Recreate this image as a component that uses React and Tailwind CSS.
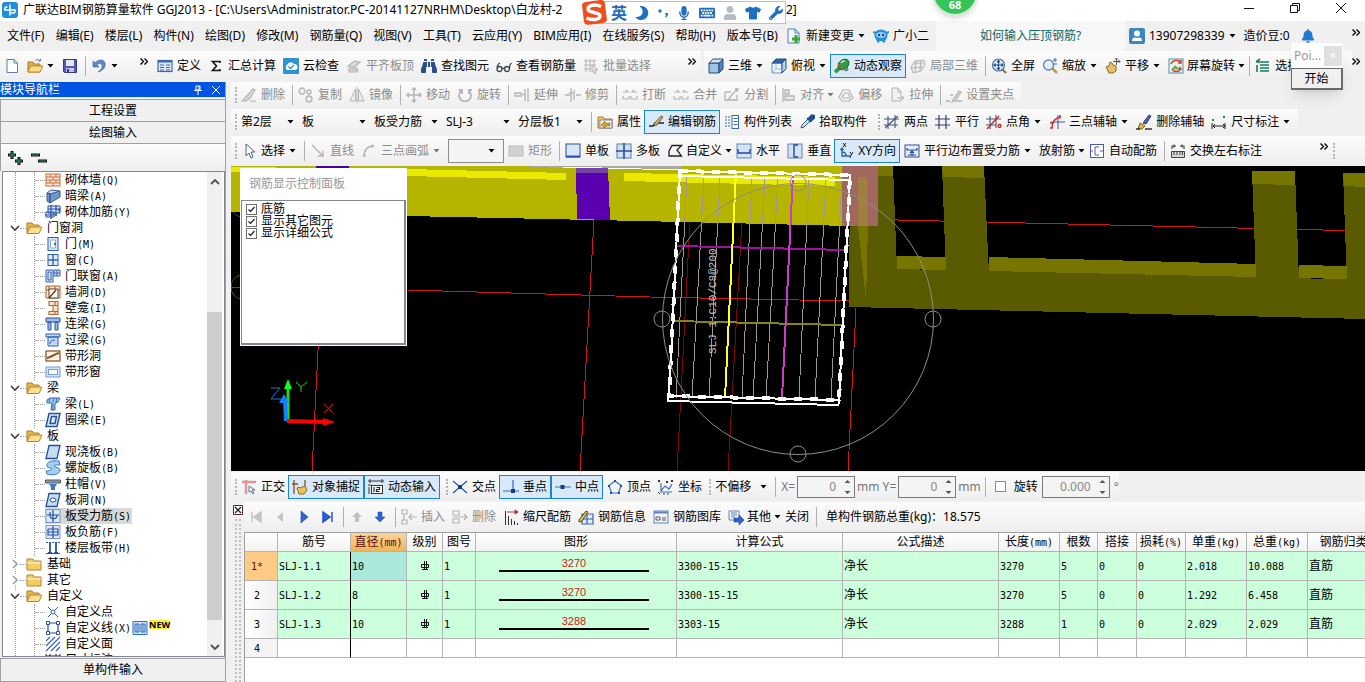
import { useState } from "react";
import {
  FaMoon,
  FaMicrophone,
  FaKeyboard,
  FaTshirt,
  FaWrench,
  FaBell,
  FaBinoculars,
  FaUser,
} from "react-icons/fa";

const BLUE = "#3a66b0";
const GRAY = "#b4b4b4";

/* All glyphs are drawn on a 16x16 grid */
const icons = {
  app: (
    <>
      <rect width="16" height="16" rx="3" fill="#1e8fe0" />
      <path d="M8 2.500v11M5.500 5H4a2 2 0 0 0-1 3h10a2 2 0 0 1-2 3H9" stroke="#fff" strokeWidth="1.500" fill="none" />
    </>
  ),
  newFile: (
    <path d="M3 1.500h7l3.500 3.500v9.500H3zM10 1.500V5h3.500" fill="#fff" stroke="#5c7ea8" />
  ),
  open: (
    <>
      <path d="M1 4h5l1 2h6v8H1z" fill="#e2b04a" stroke="#a87b22" />
      <path d="M3.500 8H16l-3 6H1z" fill="#f9dc8b" stroke="#b58a2c" />
      <path d="M8 3c2-2 4-2 5 0m-2 0h2.500V1" stroke="#4b7fb5" fill="none" />
    </>
  ),
  save: (
    <>
      <path d="M1.500 1.500h13v13h-12l-1-1z" fill="#5656b4" stroke="#38388a" />
      <rect x="4" y="2" width="8" height="6" fill="#e6e8f4" />
      <rect x="4" y="10" width="8" height="4" fill="#c3c6dd" />
      <rect x="5" y="11" width="2" height="3" fill="#38388a" />
    </>
  ),
  undo: (
    <path d="M2 3v6h6L6 7c3-3 6-1 5 2-.5 2-2 3.500-4 5 5-1 8-5 7-9-1-4-7-4-10 0z" fill="#5f87c8" stroke="#3c5f9e" strokeWidth=".6" />
  ),
  define: (
    <>
      <rect x="1" y="2.500" width="14" height="11" fill="#dfe9f8" stroke={BLUE} strokeWidth="1.200" />
      <path d="M1 3.500h14" stroke={BLUE} strokeWidth="2" />
      <path d="M3 7h4M3 9.500h4M3 12h4M9 7h4M9 9.500h4M9 12h4" stroke={BLUE} />
    </>
  ),
  sigma: <path d="M12 5V3.500H4.500L8.500 8l-4 4.500H12V11" fill="none" stroke="#111" strokeWidth="1.600" />,
  cloudCheck: (
    <>
      <rect width="16" height="16" rx="1" fill="#2d93d1" />
      <path d="M4 12a3 3 0 0 1 0-5 4 4 0 0 1 7-1 3 3 0 0 1 1 6z" fill="#fff" />
      <path d="M5.500 8.500l2 2 3.500-3.500" stroke="#2d93d1" strokeWidth="1.400" fill="none" />
    </>
  ),
  flatTop: (
    <path d="M2 8l7-5 5 1-6 5zM3 10h8v4H3zM5 12h8" fill="#dcdcdc" stroke={GRAY} strokeWidth="1.200" />
  ),
  glasses: (
    <path d="M1 11a2.500 2.500 0 1 0 5 0 2.500 2.500 0 1 0-5 0C1 8 2 6 4 5M8.500 11a2.500 2.500 0 1 0 5 0 2.500 2.500 0 1 0-5 0M6 10.500h2.500M13.500 11c0-3 .5-5 2-6" fill="none" stroke="#3d4554" strokeWidth="1.300" />
  ),
  batch: (
    <>
      <path d="M1 3h12M1 7h12M1 11h7M3 1v13M7 1v13M11 1v7" stroke={GRAY} fill="none" />
      <path d="M9 7l6 5h-3l1 3-2 .5-1-3-1 1z" fill="#e6e6e6" stroke={GRAY} />
    </>
  ),
  cube: (
    <>
      <path d="M1 5h10v10H1z" fill="#9cc3e8" stroke="#274a78" />
      <path d="M1 5l4-4h10l-4 4z" fill="#d4e7f8" stroke="#274a78" />
      <path d="M11 5l4-4v10l-4 4z" fill="#4e83bd" stroke="#274a78" />
    </>
  ),
  cubeTop: (
    <>
      <path d="M1 5h10v10H1z" fill="#eef5fc" stroke="#6c8cb5" />
      <path d="M1 5l4-4h10l-4 4z" fill="#2c65ad" stroke="#274a78" />
      <path d="M11 5l4-4v10l-4 4z" fill="#bcd6ef" stroke="#274a78" />
      <path d="M1 15l4-4h10M5 11V5" stroke="#88a6c9" strokeWidth=".7" fill="none" />
    </>
  ),
  orbit: (
    <>
      <path d="M1 14l6-5" stroke="#2f9e48" strokeWidth="4" />
      <ellipse cx="9.500" cy="6.500" rx="6" ry="4.500" transform="rotate(-40 9.500 6.500)" fill="#2f9e48" stroke="#176b2c" />
      <path d="M7 5a4 4 0 0 1 4-2" stroke="#bff0c6" strokeWidth="1.500" fill="none" />
      <path d="M4 5c1 4 4 7 9 7" stroke="#c05a3a" strokeWidth="1.200" fill="none" />
      <path d="M11 13l3-1-1-3" stroke="#3a66b0" fill="none" />
    </>
  ),
  local3d: (
    <path d="M1 9l4-6 9-1 1 5-4 6-8 2zM4 5l9 0M2 10l11-1M6 2l-1 12M11 2l-1 11" fill="#ececec" stroke={GRAY} />
  ),
  fit: (
    <>
      <path d="M11 11l4 4" stroke="#8b6f47" strokeWidth="2" />
      <circle cx="7.500" cy="7" r="6" fill="#e5f0fb" stroke="#4a6ea3" strokeWidth="1.200" />
      <path d="M7.500 2.500v9M3 7h9M6 4l1.500-1.500L9 4M6 10l1.500 1.500L9 10M4.500 5.500L3 7l1.500 1.500M10.500 5.500L12 7l-1.500 1.500" stroke="#1f4e94" strokeWidth="1.200" fill="none" />
    </>
  ),
  zoom: (
    <>
      <path d="M10 10l5 5" stroke="#c39a3a" strokeWidth="2.500" />
      <circle cx="6.500" cy="7" r="5" fill="#e5f0fb" stroke="#6b89b0" strokeWidth="1.400" />
      <path d="M11 2h4M13 0v4M11 6h4" stroke="#3a66b0" />
    </>
  ),
  pan: (
    <>
      <path d="M1 9l3-1 1-4 2 1 1 2 3 1v5l-3 2H4z" fill="#e3c16c" stroke="#8c6a1c" />
      <path d="M11.500 0v7M8 3.500h7M10 1.500L11.500 0 13 1.500M13.500 2L15 3.500 13.500 5" stroke="#555" fill="none" />
    </>
  ),
  rotateScreen: (
    <>
      <rect x="1" y="1" width="14" height="14" fill="#e8f4e4" stroke="#4d8fb8" />
      <path d="M4 11l3-4 3 3 2-2 2 4z" fill="#69a85c" />
      <path d="M3 6c1-4 8-5 10-1M13 10c-1 4-7 5-9 1M13 2v3h-3" stroke="#d83a3a" strokeWidth="1.500" fill="none" />
    </>
  ),
  pickFloor: (
    <path d="M2 4h12M5 7h9M5 10h9M5 13h9M1 4l4-3M2 7v7" stroke="#167a5c" strokeWidth="1.600" fill="none" />
  ),
  brush: (
    <path d="M6 9l6-7 2 1-5 8-4 3H2l2-3zM0 14h3M9 14h6" fill="#dedede" stroke={GRAY} strokeWidth="1.200" />
  ),
  copy: (
    <path d="M1 4a3 3 0 1 0 6 0 3 3 0 1 0-6 0M8 12a3 3 0 1 0 6 0 3 3 0 1 0-6 0M9 5a2 2 0 1 0 4 0 2 2 0 1 0-4 0" fill="#eee" stroke={GRAY} strokeWidth="1.300" />
  ),
  mirror: <path d="M6.500 2v12H1zM9.500 2v12H15zM8 0v16" fill="#eee" stroke={GRAY} />,
  move: (
    <path d="M8 1v14M1 8h14M6 3l2-2 2 2M6 13l2 2 2-2M3 6L1 8l2 2M13 6l2 2-2 2" stroke={GRAY} strokeWidth="1.500" fill="none" />
  ),
  rotate: <path d="M4 4a6 6 0 1 0 8 0M12 7V3h3M5 7V3H2" stroke={GRAY} strokeWidth="1.800" fill="none" />,
  extend: <path d="M1 6h6v3H1zM8 7.500h3M11 2v12M14 1v14" stroke={GRAY} strokeWidth="1.300" fill="none" />,
  trim: <path d="M0 8h5M11 8h5M6 1v14M9 3v10M4 6h4" stroke={GRAY} strokeWidth="1.300" fill="none" />,
  breakIcon: <path d="M1 12h6M9 12h6M1 9v3M15 9v3M1 5h5l-2-2M15 5h-5l2-2M7 9v3M9 9v3" stroke={GRAY} strokeWidth="1.200" fill="none" />,
  split: <path d="M1 5h6M1 5v8h12V8M3 14l10-12M11 2l3 0-1 3" stroke={GRAY} strokeWidth="1.300" fill="none" />,
  align: <path d="M2 1v14M4 3h4v4H4zM4 9h9v4H4z" stroke={GRAY} strokeWidth="1.300" fill="#ececec" />,
  offset: <path d="M5 3h6l4 8-4 3H4l-3-4zM7 6h3l2 4-1 1H6l-2-1z" stroke={GRAY} strokeWidth="1.200" fill="none" />,
  stretch: <path d="M3 1h6l3 4v9H3zM9 1v4h3M8 11h7l-2-2M15 11l-2 2" stroke={GRAY} fill="#f2f2f2" />,
  grip: <path d="M0 14h4M7 13l6-9 2 1-6 9-3 1zM10 14h6M4 8h3" stroke={GRAY} strokeWidth="1.300" fill="#ddd" />,
  property: (
    <>
      <path d="M1 3h5l1 2h8v9H1z" fill="#f3cf6b" stroke="#a07a25" />
      <rect x="3" y="6" width="12" height="8" fill="#fff" stroke="#7c7c9c" />
      <path d="M4 11l4-4v2h5v3H8v2z" fill="#e0a520" stroke="#7a5a10" strokeWidth=".6" />
    </>
  ),
  editRebar: (
    <>
      <path d="M1 12h4l2-3h9" stroke="#222" strokeWidth="1.400" fill="none" />
      <path d="M6 10l7-8 2 1-6 8-3 1z" fill="#c9b27a" stroke="#54431b" strokeWidth=".8" />
    </>
  ),
  list: (
    <>
      <path d="M1 3h2M4 3h2M1 6h2M4 6h2M1 9h2M4 9h2M1 12h2M4 12h2" stroke="#3a66b0" strokeWidth="1.200" />
      <rect x="8" y="1.500" width="6.500" height="13" fill="#fff" stroke="#3a66b0" />
      <path d="M9.500 4.500h4M9.500 7.500h4M9.500 10.500h4" stroke="#3a66b0" />
    </>
  ),
  dropper: (
    <>
      <path d="M2 14l1-3 6-6 2 2-6 6z" fill="#d7e9f8" stroke="#2a5a92" />
      <path d="M8 4l4 4M9 5l3-3.500a2 2 0 0 1 3 3L11 8" fill="#1d4f8c" stroke="#1d4f8c" strokeWidth="1.400" />
    </>
  ),
  axis2: <path d="M4 2v13M11 1v13M0 5h15M0 11h14M1 14L14 2" stroke="#44547a" strokeWidth="1.100" fill="none" />,
  axisPar: <path d="M4 1v14M11 1v14M0 5h15M0 11h15" stroke="#3c3c78" strokeWidth="1.200" fill="none" />,
  axisAngle: (
    <>
      <path d="M4 2v13M10 1v13M0 5h15M0 11h10" stroke="#44547a" strokeWidth="1.100" />
      <path d="M1 15L13 2M12 12a1.500 1.500 0 1 0 3 0 1.500 1.500 0 1 0-3 0" stroke="#c22" strokeWidth="1.300" fill="none" />
    </>
  ),
  axis3: (
    <>
      <path d="M9 1v14M2 8h14" stroke="#3a56a0" />
      <path d="M3 14C3 8 5 4 12 3M11 1v3.500M1 9h4M1 14h3" stroke="#c33" strokeWidth="1.500" fill="none" />
    </>
  ),
  axisDel: (
    <>
      <path d="M7 9l6-8 2 1-5 8z" fill="#4c5fb8" stroke="#303c80" />
      <path d="M4 9l5 3-3 3H2z" fill="#d9b84a" stroke="#7d641a" />
      <path d="M0 15h4M9 15h7" stroke="#333" strokeWidth="1.300" />
    </>
  ),
  dim: (
    <>
      <path d="M1 9v6M14 9v6M2 12h12M4 10l-2 2 2 2M12 10l2 2-2 2" stroke="#222" fill="none" />
      <path d="M1 5h2v2H1zM12 2h2v2h-2z" fill="#2b8f3a" />
    </>
  ),
  cursor: <path d="M5 1v12l3-3 2 5 2-1-2-5h4z" fill="#fff" stroke="#4a6487" />,
  line: <path d="M2 2l11 11M13 8v5H8" stroke={GRAY} strokeWidth="1.400" fill="none" />,
  arc: <path d="M3 14C3 7 6 3 13 3M2 12.500h3M11.500 1.500v3" stroke={GRAY} strokeWidth="1.500" fill="none" />,
  rect: <rect x="1" y="3" width="14" height="10" fill="#d2d2d2" stroke="#bdbdbd" />,
  slab: (
    <>
      <rect x="1" y="1" width="14" height="13" fill="#d7e6fa" stroke="#2c4f8f" />
      <path d="M1 13.500h14" stroke="#2c57b8" strokeWidth="2" />
    </>
  ),
  multiSlab: (
    <>
      <rect x="1" y="1" width="14" height="14" fill="#cfe2f7" stroke="#5b7ea8" />
      <path d="M8 0v16M0 8h16" stroke="#2c4f8f" strokeWidth="1.600" />
    </>
  ),
  polygon: <path d="M5 2.500h9.500L10 7l4.500 6H2V8z" fill="none" stroke="#222" strokeWidth="1.300" />,
  horiz: (
    <>
      <rect x="1" y="1" width="14" height="14" fill="#d3e3f7" stroke="#6683b0" />
      <path d="M2 6v4h12V6" fill="none" stroke="#2448a0" strokeWidth="1.400" />
    </>
  ),
  vert: (
    <>
      <rect x="1" y="1" width="14" height="14" fill="#d3e3f7" stroke="#6683b0" />
      <path d="M11 2H7v12h4" fill="none" stroke="#2448a0" strokeWidth="1.400" />
    </>
  ),
  xy: (
    <>
      <path d="M4 5v8h8M2.500 7L4 5l1.500 2M4 9c3 0 4 1 4 4" stroke="#2464a8" strokeWidth="1.300" fill="none" />
      <path d="M5 0l3 4M8 0L5 4M12 9l1.500 2.500L15 9M13.500 11L12 15" stroke="#222" fill="none" />
    </>
  ),
  parallel: (
    <>
      <rect x="1" y="2" width="14" height="12" fill="#e5eefa" stroke="#2c4f8f" />
      <path d="M3 5v2h10V5M8 13V8M6 10l2-2 2 2M4 12h8" stroke="#2448a0" strokeWidth="1.200" fill="none" />
    </>
  ),
  autoRebar: (
    <>
      <rect x="1.500" y="1.500" width="13" height="13" fill="#fff" stroke="#4a5ab0" />
      <path d="M10 4H6v8h4M1 8h3M11 8h4" stroke="#4a5ab0" fill="none" />
    </>
  ),
  swap: (
    <>
      <path d="M2 6V3h4M14 6V3h-4M4 1.500v3M12 1.500v3" stroke="#444" fill="none" strokeWidth="1.200" />
      <path d="M1.500 8.500h13v6h-13z" fill="#d8d8d8" stroke="#444" />
      <path d="M4 9v3M7 9v3M10 9v3M12.500 9v3" stroke="#444" />
    </>
  ),
  ortho: (
    <>
      <path d="M1 3h14M5 1v14" stroke="#d99a95" strokeWidth="2.500" />
      <path d="M8 7v6l2-1 2 3 1-1-2-3h3z" fill="#fff" stroke="#5a728f" />
    </>
  ),
  snap: (
    <>
      <path d="M2 1v14M13 1v6M0 5h6" stroke="#8a4a2a" strokeWidth="1.300" />
      <path d="M5 9l2-1 1 1 5-2 2 4-3 4H7z" fill="#e8c25c" stroke="#8c6a1c" />
    </>
  ),
  dynInput: (
    <>
      <path d="M0 2h16M2 0v4M14 0v4M1 15V8M0 6h3" stroke="#333" />
      <rect x="3.500" y="6.500" width="11" height="8" fill="#fff" stroke="#333" />
      <path d="M6 8v5M8.500 8.500h3v2h-3v2h3" stroke="#222" strokeWidth="1.200" fill="none" />
    </>
  ),
  cross: (
    <>
      <path d="M1 2l14 12M15 2L1 14" stroke="#1f57b5" strokeWidth="1.200" />
      <path d="M6 6h4v4H6z" fill="#143b86" />
    </>
  ),
  perp: (
    <>
      <path d="M10 1v11M0 12h16" stroke="#2c67bd" strokeWidth="1.200" />
      <path d="M8 10h4v4H8z" fill="#143b86" />
    </>
  ),
  mid: (
    <>
      <path d="M0 8h16" stroke="#4d86c9" strokeWidth="1.200" />
      <path d="M5.500 6h4v4h-4z" fill="#143b86" />
    </>
  ),
  vertex: (
    <>
      <path d="M8 2l6 4.500-2.500 7.500h-7L2 6.500z" fill="none" stroke="#2f6fc0" strokeWidth="1.100" />
      <path d="M7 1h2v2H7zM13 6h2v2h-2zM11 13h2v2h-2zM3 13h2v2H3zM1 6h2v2H1z" fill="#1c4c9c" />
    </>
  ),
  coord: (
    <>
      <path d="M3 4v9h11M3 12l4-5 4 3 3-5" stroke="#3470bd" fill="none" strokeWidth="1.200" />
      <path d="M0 1l2 2M2 1L0 3M8 2l2 2M10 2L8 4M13 1l2 2M15 1l-2 2M0 13l2 2M6 14v2M10 14v2" stroke="#333" />
    </>
  ),
  first: <path d="M4 3v10M13 3L6 8l7 5z" fill="#c4c4c4" stroke="#c4c4c4" strokeWidth="1.500" />,
  prev: <path d="M11 3L5 8l6 5z" fill="#c4c4c4" />,
  next: <path d="M5 2l7 6-7 6z" fill="#2f62d9" stroke="#1d47a8" strokeWidth=".6" />,
  last: <path d="M3 3l7 5-7 5zM12 3v10" fill="#2f62d9" stroke="#2353c4" strokeWidth="1.500" />,
  up: <path d="M8 3l5 5h-3v5H6V8H3z" fill="#c0c0c0" />,
  down: <path d="M8 13L3 8h3V3h4v5h3z" fill="#2f62d9" stroke="#1d47a8" strokeWidth=".5" />,
  insert: <path d="M1 1h5v4H1zM1 11h5v4H1zM3 5v6M8 8h8M11 5L8 8l3 3" stroke={GRAY} fill="none" strokeWidth="1.200" />,
  remove: <path d="M1 2h6v4H1zM1 10h6v4H1zM1 8h14M12 5l3 3-3 3" stroke={GRAY} fill="none" strokeWidth="1.200" />,
  scale: (
    <>
      <path d="M2.500 2v14M5.500 7v9M8.500 10v6M11.500 12v4M14.500 14v2" stroke="#333" />
      <path d="M4 3h8M12 1l3 2-3 2z" stroke="#a33" fill="#a33" />
    </>
  ),
  info: (
    <>
      <path d="M4 5h11v10H4zM9 5v10M4 10h11" fill="#e2edfa" stroke="#3563ab" strokeWidth="1.200" />
      <path d="M1 11l7-9 2 1-6 9-3 1z" fill="#e0bf62" stroke="#5b4512" />
    </>
  ),
  library: (
    <>
      <rect x="1" y="2" width="14" height="12" fill="#f3f7fd" stroke="#5f83bd" />
      <path d="M1 3.500h14" stroke="#5f83bd" strokeWidth="2" />
      <path d="M3 8h4v3H3zM9 9h4M9 11h4" stroke="#555" fill="none" />
    </>
  ),
  other: (
    <>
      <path d="M1 2h10v9H1zM3 4h6M3 6h6M3 8h4" fill="#f3f7fd" stroke="#6a85b5" />
      <path d="M6 9h5V6l5 5-5 5v-3H6z" fill="#2f62d9" stroke="#1d3f94" strokeWidth=".6" />
    </>
  ),
  newChange: (
    <>
      <path d="M2 1h7l4 4v10H2zM9 1v4h4" fill="#f4f9ff" stroke="#4d80b5" />
      <path d="M10 7v8M6 11h8" stroke="#3fa535" strokeWidth="3" />
    </>
  ),
  mascot: (
    <>
      <path d="M8 1.500c5 0 8 4 6 8-1 2-2 3-2 5H9.500v-1.500h-3v1.500H4c0-2-1-3-2-5-2-4 1-8 6-8z" fill="#2590dc" />
      <ellipse cx="8" cy="7" rx="5" ry="3" fill="#8fcdf5" />
      <path d="M5 6h2v2H5zM9 6h2v2H9z" fill="#124a7a" />
      <path d="M0 4l3 1M16 4l-3 1" stroke="#2590dc" strokeWidth="2" />
    </>
  ),
  user: (
    <>
      <rect width="16" height="16" rx="2" fill="#3c86bd" />
      <circle cx="8" cy="5.500" r="3" fill="#fff" />
      <path d="M3 13c0-4 3-4 5-3 2-1 5-1 5 3z" fill="#fff" />
    </>
  ),
  folder: (
    <>
      <path d="M1 3h6l1 2h7v9H1z" fill="#f5cb62" stroke="#b78526" />
      <path d="M1.500 7h13" stroke="#fbe6ab" strokeWidth="2" />
    </>
  ),
  folderOpen: (
    <>
      <path d="M1 3h5l1.500 2H13v8H1z" fill="#e8b64c" stroke="#a87b22" />
      <path d="M4 7h12l-3 6.500H1z" fill="#fbdf92" stroke="#b58a2c" />
    </>
  ),
  brick: (
    <>
      <rect x="1" y="2" width="14" height="12" fill="#fbe6d6" stroke="#c4703c" />
      <path d="M1 5h14M1 8h14M1 11h14M5 2v3M11 2v3M8 5v3M5 8v3M11 8v3M8 11v3" stroke="#c4703c" />
    </>
  ),
  hiddenBeam: (
    <>
      <path d="M2 5l4-3 9 1-4 4z" fill="#cfe0f5" stroke="#39598c" />
      <path d="M2 5l3 1v9l-3-2zM5 6l10-3v6L5 15z" fill="#6f97cd" stroke="#39598c" />
    </>
  ),
  wallRebar: (
    <>
      <path d="M3 2h12v7H3zM1 8h8v5H1z" fill="#dce8f8" stroke="#2451a4" />
      <path d="M6 1v14M3 5h13M11 1v11M0 11h12M13 5l2 3" stroke="#2451a4" strokeWidth="1.200" fill="none" />
    </>
  ),
  door: (
    <>
      <rect x="3" y="1.500" width="10" height="13" fill="#dbe8fa" stroke="#2f5fb0" />
      <path d="M5.500 4h5v8h-5z" fill="#fff" stroke="#8cabd8" />
      <path d="M9 7h2v2H9z" fill="#2f5fb0" />
    </>
  ),
  window: (
    <>
      <rect x="3" y="2.500" width="10" height="11" fill="#e6f0fc" stroke="#2f5fb0" />
      <path d="M8 3v10M3 8h10" stroke="#2f5fb0" strokeWidth="1.400" />
    </>
  ),
  doorWindow: <path d="M1 2h7v12H1zM3 4h3v8H3zM9 2h6v6H9zM12 2v6M9 5h6" fill="#dbe8fa" stroke="#2f5fb0" />,
  wallHole: (
    <>
      <path d="M1 2h14v12H1zM1 6h14M4 2v4M10 2v4" fill="#fbe6d6" stroke="#a8602f" />
      <path d="M4 5h9v9H4z" fill="#fff" stroke="#5b3a20" />
      <path d="M4 14l7-8" stroke="#5b3a20" strokeWidth="1.300" />
    </>
  ),
  niche: <path d="M4 1.500h9v13H4v-3h4v-6H4zM8 5.500h5M8 11.500h5M10 1.500v4M10 11.500v3" fill="#fde3cd" stroke="#b8652c" strokeWidth="1.100" />,
  linkBeam: <path d="M1 2h14v4H1zM3 6h3v8H3zM10 6h3v8h-3z" fill="#9cbdea" stroke="#2451a4" />,
  overBeam: <path d="M1 2h14v3H1zM3 5h10v9H3zM5 12c0-3 2-4 5-4" fill="#c3daf6" stroke="#2f5fb0" />,
  stripHole: (
    <>
      <rect x="1" y="3" width="14" height="10" fill="#fff3e6" stroke="#8a4c20" strokeWidth="1.200" />
      <path d="M2 10c4 0 7-4 12-5" stroke="#8a4c20" strokeWidth="2" fill="none" />
    </>
  ),
  stripWindow: (
    <>
      <rect x="1" y="3" width="14" height="10" fill="#d3e2f8" stroke="#7b9bd6" />
      <rect x="3.500" y="5.500" width="9" height="5" fill="#fff" stroke="#7b9bd6" />
    </>
  ),
  beam: (
    <>
      <path d="M2 4l3-2h10l-2 4-3 1v7H6l1-7H2z" fill="#a6c8f0" stroke="#2f6ab8" />
      <path d="M5 2l-1 4M9 2L8 6M12 2l-1 4M8 8v6" stroke="#2f6ab8" />
    </>
  ),
  ringBeam: <path d="M4 1.500h11l-3 13H1zM6.500 4.500h5l-1.500 7H5z" fill="#dfeafa" stroke="#2451a4" strokeWidth="1.500" />,
  castSlab: <path d="M4 1.500h11l-3 13H1z" fill="#c8dcf6" stroke="#2451a4" strokeWidth="1.300" />,
  spiral: <path d="M14 1C7 0 1 2 2 6c0 3 5 1 5 3 0 1-3 2-6 2l1 3c6 2 13 0 13-4 0-3-6-2-6-4 0-1 3-1 6-1z" fill="#a8cdf5" stroke="#2f7cc8" />,
  cap: (
    <>
      <path d="M.5 4h15v3H.5z" fill="#8b98a8" stroke="#4d5a6a" />
      <path d="M4 8h8l-2 3v3H6v-3z" fill="#3f77c8" />
    </>
  ),
  slabHole: (
    <>
      <path d="M4 1.500h11l-3 13H1z" fill="#c8dcf6" stroke="#2451a4" strokeWidth="1.300" />
      <ellipse cx="8" cy="8" rx="3" ry="2" fill="#fff" stroke="#2451a4" />
    </>
  ),
  forceRebar: (
    <>
      <rect x="1" y="1.500" width="14" height="13" fill="#dce8f8" stroke="#7b96c6" />
      <path d="M8 2v12M2 7h12M5 4v3c0 5 7 5 7 0" stroke="#2451a4" fill="none" strokeWidth="1.200" />
    </>
  ),
  negRebar: (
    <>
      <rect x="1" y="1.500" width="14" height="13" fill="#dce8f8" stroke="#7b96c6" />
      <path d="M8 2v12M3 5h10v6H3V5M3 8h10" stroke="#2451a4" fill="none" strokeWidth="1.200" />
    </>
  ),
  band: (
    <>
      <path d="M1 2.500h14M1 13.500h14" stroke="#2451a4" strokeDasharray="2 1" />
      <path d="M5 3v10M11 3v10M3 13h4M9 13h4" stroke="#2451a4" strokeWidth="1.800" />
    </>
  ),
  customPoint: (
    <>
      <path d="M3 3l10 10M13 3L3 13" stroke="#2f62b8" />
      <circle cx="8" cy="8" r="2" fill="#fff" stroke="#2f62b8" />
    </>
  ),
  customLine: (
    <>
      <path d="M3 3h10v10H3z" fill="none" stroke="#2451a4" strokeWidth="1.200" />
      <path d="M1.500 1.500h3v3h-3zM11.500 1.500h3v3h-3zM1.500 11.500h3v3h-3zM11.500 11.500h3v3h-3z" fill="#fff" stroke="#2451a4" />
    </>
  ),
  customFace: <path d="M1 5l4-4M1 10l9-9M1 15L15 1M6 15l9-9M11 15l4-4" stroke="#2f62b8" strokeWidth="1.100" />,
  dimension: <path d="M1 2v12M15 2v12M5 2v12M11 2v12M1 4h14" stroke="#222" />,
  book: <path d="M1 1.500h14v13H1zM3 4h4v8H3zM9 4h4v8H9zM5 4v8M11 4v8" fill="#cfe4fa" stroke="#2f6fc0" />,
};

const Icon = ({ name, className = "size-4" }) => (
  <svg viewBox="0 0 16 16" className={`${className} shrink-0`} aria-hidden="true">
    {icons[name]}
  </svg>
);

const Caret = ({ className = "text-black" }) => (
  <svg viewBox="0 0 7 4" className={`h-1 w-[7px] shrink-0 ${className}`} aria-hidden="true">
    <path d="M.5 0h6L3.500 3.500z" fill="currentColor" />
  </svg>
);

const Grip = () => (
  <span className="mr-1 h-4 shrink-0 self-center border-l-2 border-dotted border-[#b5b5b5]" />
);

const Sep = () => <span className="mr-[5px] h-5 w-px shrink-0 bg-[#b0b0b0]" />;

const More = () => (
  <svg viewBox="0 0 8 7" className="mr-[5px] mb-2 h-[7px] w-2 shrink-0" role="img" aria-label="更多">
    <path d="M.5.5l3 3-3 3M4.500.5l3 3-3 3" fill="none" stroke="#000" strokeWidth="1.400" />
  </svg>
);

const Tool = ({ icon, children, disabled, active, menu, compact, label }) => (
  <button
    type="button"
    disabled={disabled}
    aria-label={label}
    className={`flex h-6 shrink-0 items-center whitespace-nowrap ${
      disabled ? "text-[#8c8c8c]" : "text-black"
    } ${active ? "-ml-1 mr-1 border border-[#1883d7] bg-[#d8eafa] px-[3px]" : ""} ${
      menu && !compact ? "gap-1 pr-2" : ""
    } ${compact ? "gap-[3px] pr-1" : ""} ${!menu && !active ? "gap-1 pr-[7px]" : ""} ${
      active ? "gap-1" : ""
    }`}
  >
    {icon && <Icon name={icon} />}
    {children}
    {menu && <Caret className={disabled ? "text-[#777]" : "text-black"} />}
  </button>
);

const Toolbar = ({ children, className = "" }) => (
  <div
    className={`flex items-center bg-linear-to-b from-[#fcfcfc] to-[#eeeeee] pl-1 ${className}`}
  >
    {children}
  </div>
);

const Combo = ({ label, value, className }) => (
  <span className={`relative flex h-6 shrink-0 items-center ${className}`}>
    <select
      aria-label={label}
      className="w-full appearance-none bg-transparent outline-none"
      defaultValue={value}
    >
      <option>{value}</option>
    </select>
    <span className="pointer-events-none absolute right-2">
      <Caret />
    </span>
  </span>
);

const Spin = ({ label, value, className }) => (
  <span className={`flex h-[22px] shrink-0 items-center border border-[#7a7a7a] bg-[#f4f4f4] ${className}`}>
    <input
      aria-label={label}
      defaultValue={value}
      className="w-full min-w-0 bg-transparent pr-2 text-right text-[#8a8a8a] outline-none"
    />
    <svg viewBox="0 0 7 16" className="mr-[3px] h-4 w-[7px] shrink-0" aria-hidden="true">
      <path d="M0.500 4h6L3.500 1zM0.500 12h6l-3 3z" fill="#555" />
    </svg>
  </span>
);

/* Half-width characters take exactly half of a CJK cell */
const Mono = ({ children }) =>
  String(children)
    .split(/([\x20-\x7e]+)/)
    .filter(Boolean)
    .map((part, i) =>
      /^[\x20-\x7e]/.test(part) ? (
        <span key={i} className="text-[10px]">
          {part}
        </span>
      ) : (
        part
      )
    );

const menus = [
  "文件(F)",
  "编辑(E)",
  "楼层(L)",
  "构件(N)",
  "绘图(D)",
  "修改(M)",
  "钢筋量(Q)",
  "视图(V)",
  "工具(T)",
  "云应用(Y)",
  "BIM应用(I)",
  "在线服务(S)",
  "帮助(H)",
  "版本号(B)",
];

const TitleBar = () => (
  <header className="flex h-[21px] shrink-0 items-start bg-white">
    <div className="flex flex-1 items-center gap-[5px] overflow-hidden pl-[2px] whitespace-nowrap">
      <Icon name="app" />
      <h1 className="pt-px leading-[18px]">
        广联达BIM钢筋算量软件 GGJ2013 - [C:\Users\Administrator.PC-20141127NRHM\Desktop\白龙村-2
      </h1>
    </div>
    <span className="w-[579px] shrink-0 pt-px leading-[18px]">2]</span>
    <div className="absolute right-0 flex gap-[26px] pt-px pr-[14px]">
      {[
        ["最小化", "M2 7.500h10"],
        ["还原", "M2.500 4.500h7v7h-7zM4.500 4.500v-2h7v7h-2"],
        ["关闭窗口", "M2 2l10 10M12 2L2 12"],
      ].map(([label, d]) => (
        <button key={label} type="button" aria-label={label} className="px-[3px]">
          <svg viewBox="0 0 14 14" className="size-[14px]">
            <path d={d} fill="none" stroke="#111" />
          </svg>
        </button>
      ))}
    </div>
  </header>
);

const ImeBar = () => (
  <div className="absolute top-0 left-[581px] flex h-[25px] items-center">
    <svg viewBox="0 0 26 26" className="z-10 h-[26px] w-[26px]" aria-hidden="true">
      <rect x="2" y="1" width="23" height="23" rx="4" transform="rotate(-7 13 13)" fill="#ee4e1c" />
      <path d="M20 6.500C15 4 7 5 7 9c0 4.500 12 2.500 12 7 0 4-9 4.500-13.500 2" fill="none" stroke="#fff" strokeWidth="3.500" />
    </svg>
    <div className="-ml-3 flex h-[23px] items-center gap-2 border border-[#a9c6e6] bg-white pr-[2px] pl-[15px] text-[#1f6fc0]">
      <span className="text-base leading-5 font-bold">英</span>
      <FaMoon className="size-[14px] -scale-x-100" />
      <svg viewBox="0 0 12 12" className="size-3">
        <circle cx="3" cy="4" r="1.700" fill="currentColor" />
        <path d="M8 6h3c0 3-1 4-3 5 1-2 1-3 0-5z" fill="currentColor" />
      </svg>
      <FaMicrophone className="size-[14px]" />
      <FaKeyboard className="size-4" />
      <FaUser className="size-[14px] text-[#b3bcc8]" />
      <FaTshirt className="size-4" />
      <FaWrench className="size-[14px]" />
    </div>
  </div>
);

const MenuBar = () => (
  <nav className="flex h-[30px] shrink-0 items-center bg-[#f0f0f0] whitespace-nowrap">
    <div className="flex w-[786px] shrink-0 justify-between pr-2 pl-[7px]">
      {menus.map((m) => (
        <button key={m} type="button">
          {m}
        </button>
      ))}
    </div>
    <Tool icon="newChange" menu>
      新建变更
    </Tool>
    <Tool icon="mascot">广小二</Tool>
    <div className="flex h-full flex-1 items-center justify-center bg-[#f8f8f8]">
      <a href="#help" className="text-[#0b6468]">
        如何输入压顶钢筋?
      </a>
    </div>
    <div className="flex w-[240px] shrink-0 items-center pl-1">
      <Tool icon="user" menu>
        13907298339
      </Tool>
      <Tool>造价豆:0</Tool>
      <FaBell className="ml-1 size-[14px] text-[#2178d6]" />
      <span className="flex-1" />
      <More />
    </div>
  </nav>
);

const MainToolbar = () => (
  <div className="flex h-[31px] shrink-0 items-start">
    <Toolbar className="h-[29px] w-[153px] shrink-0">
      <Tool icon="newFile" label="新建" />
      <Tool icon="open" label="打开" menu />
      <Tool icon="save" label="保存" />
      <Sep />
      <Tool icon="undo" label="撤销" menu />
      <span className="flex-1" />
      <More />
    </Toolbar>
    <Toolbar className="h-[29px] w-[548px] shrink-0">
      <Tool icon="define">定义</Tool>
      <Tool icon="sigma">汇总计算</Tool>
      <Tool icon="cloudCheck">云检查</Tool>
      <Tool icon="flatTop" disabled>
        平齐板顶
      </Tool>
      <button type="button" className="flex items-center gap-1 pr-[7px]">
        <FaBinoculars className="size-4 text-[#274f86]" />
        查找图元
      </button>
      <Tool icon="glasses">查看钢筋量</Tool>
      <Tool icon="batch" disabled>
        批量选择
      </Tool>
      <span className="flex-1" />
      <More />
    </Toolbar>
    <Toolbar className="ml-[3px] h-[29px] flex-1 overflow-hidden">
      <Tool icon="cube" menu>
        三维
      </Tool>
      <Tool icon="cubeTop" menu>
        俯视
      </Tool>
      <Tool icon="orbit" active>
        动态观察
      </Tool>
      <Tool icon="local3d" disabled>
        局部三维
      </Tool>
      <Sep />
      <Tool icon="fit">全屏</Tool>
      <Tool icon="zoom" menu>
        缩放
      </Tool>
      <Tool icon="pan" menu>
        平移
      </Tool>
      <Tool icon="rotateScreen" menu compact>
        屏幕旋转
      </Tool>
      <Sep />
      <Tool icon="pickFloor">选择</Tool>
    </Toolbar>
    <span className="flex h-[29px] shrink-0 items-center">
      <More />
    </span>
  </div>
);

const EditToolbar = () => (
  <Toolbar className="h-[26px] w-fit">
    <Grip />
    <Tool icon="brush" disabled>
      删除
    </Tool>
    <Sep />
    <Tool icon="copy" disabled>
      复制
    </Tool>
    <Tool icon="mirror" disabled>
      镜像
    </Tool>
    <Sep />
    <Tool icon="move" disabled>
      移动
    </Tool>
    <Tool icon="rotate" disabled>
      旋转
    </Tool>
    <Sep />
    <Tool icon="extend" disabled>
      延伸
    </Tool>
    <Tool icon="trim" disabled>
      修剪
    </Tool>
    <Sep />
    <Tool icon="breakIcon" disabled>
      打断
    </Tool>
    <Tool icon="breakIcon" disabled>
      合并
    </Tool>
    <Tool icon="split" disabled>
      分割
    </Tool>
    <Sep />
    <Tool icon="align" disabled menu compact>
      对齐
    </Tool>
    <Tool icon="offset" disabled>
      偏移
    </Tool>
    <Tool icon="stretch" disabled>
      拉伸
    </Tool>
    <Sep />
    <Tool icon="grip" disabled>
      设置夹点
    </Tool>
  </Toolbar>
);

const ComponentToolbar = () => (
  <Toolbar className="h-[26px] w-fit">
    <Grip />
    <Combo label="楼层" value="第2层" className="w-[61px]" />
    <Combo label="构件类别" value="板" className="w-[72px]" />
    <Combo label="构件类型" value="板受力筋" className="w-[72px]" />
    <Combo label="构件名称" value="SLJ-3" className="w-[72px]" />
    <Combo label="分层" value="分层板1" className="w-[73px]" />
    <Sep />
    <Tool icon="property">属性</Tool>
    <Tool icon="editRebar" active>
      编辑钢筋
    </Tool>
    <Tool icon="list">构件列表</Tool>
    <Tool icon="dropper">拾取构件</Tool>
    <span className="flex pl-1">
      <Grip />
    </span>
    <Tool icon="axis2">两点</Tool>
    <Tool icon="axisPar">平行</Tool>
    <Tool icon="axisAngle" menu>
      点角
    </Tool>
    <Tool icon="axis3" menu>
      三点辅轴
    </Tool>
    <Tool icon="axisDel">删除辅轴</Tool>
    <Tool icon="dim" menu>
      尺寸标注
    </Tool>
  </Toolbar>
);

const DrawToolbar = () => (
  <Toolbar className="h-[29px]">
    <Grip />
    <Tool icon="cursor" menu>
      选择
    </Tool>
    <Sep />
    <Tool icon="line" disabled>
      直线
    </Tool>
    <Tool icon="arc" disabled menu>
      三点画弧
    </Tool>
    <Combo label="弧类型" value="" className="mr-1 w-[56px] border border-[#8c8c8c] bg-[#f4f4f4]" />
    <Tool icon="rect" disabled>
      矩形
    </Tool>
    <Sep />
    <Tool icon="slab">单板</Tool>
    <Tool icon="multiSlab">多板</Tool>
    <Tool icon="polygon" menu compact>
      自定义
    </Tool>
    <Tool icon="horiz">水平</Tool>
    <Tool icon="vert">垂直</Tool>
    <Tool icon="xy" active>
      XY方向
    </Tool>
    <Tool icon="parallel" menu>
      平行边布置受力筋
    </Tool>
    <Tool menu compact>
      放射筋
    </Tool>
    <Tool icon="autoRebar">自动配筋</Tool>
    <Sep />
    <Tool icon="swap">交换左右标注</Tool>
    <span className="flex-1" />
    <More />
    <span className="flex w-8">
      <Grip />
    </span>
  </Toolbar>
);

const SnapToolbar = () => (
  <div className="flex h-[31px] shrink-0 items-center bg-[#f0f0f0]">
    <Toolbar className="h-[29px]">
      <Grip />
      <Tool icon="ortho">正交</Tool>
      <Tool icon="snap" active>
        对象捕捉
      </Tool>
      <Tool icon="dynInput" active>
        动态输入
      </Tool>
      <span className="flex pl-[2px]">
        <Grip />
      </span>
      <Tool icon="cross">交点</Tool>
      <Tool icon="perp" active>
        垂点
      </Tool>
      <Tool icon="mid" active>
        中点
      </Tool>
      <Tool icon="vertex">顶点</Tool>
      <Tool icon="coord">坐标</Tool>
      <Grip />
      <Combo label="偏移方式" value="不偏移" className="w-[60px]" />
      <Sep />
      <span className="flex items-center gap-[2px] text-[#777]">
        X=
        <Spin label="X" value="0" className="w-[58px]" />
        mm Y=
        <Spin label="Y" value="0" className="w-[58px]" />
        mm
      </span>
      <span className="ml-1 flex items-center gap-1">
        <Sep />
        <label className="flex items-center gap-2">
          <input type="checkbox" className="size-[11px] appearance-none border border-[#8a8a8a] bg-white" />
          旋转
        </label>
        <Spin label="旋转角度" value="0.000" className="w-[68px]" />
        <span className="text-[#777]">°</span>
      </span>
    </Toolbar>
  </div>
);

const folders = [
  {
    open: true,
    hideTitle: true,
    items: [
      ["brick", "砌体墙(Q)"],
      ["hiddenBeam", "暗梁(A)"],
      ["wallRebar", "砌体加筋(Y)"],
    ],
  },
  {
    name: "门窗洞",
    open: true,
    items: [
      ["door", "门(M)"],
      ["window", "窗(C)"],
      ["doorWindow", "门联窗(A)"],
      ["wallHole", "墙洞(D)"],
      ["niche", "壁龛(I)"],
      ["linkBeam", "连梁(G)"],
      ["overBeam", "过梁(G)"],
      ["stripHole", "带形洞"],
      ["stripWindow", "带形窗"],
    ],
  },
  {
    name: "梁",
    open: true,
    items: [
      ["beam", "梁(L)"],
      ["ringBeam", "圈梁(E)"],
    ],
  },
  {
    name: "板",
    open: true,
    items: [
      ["castSlab", "现浇板(B)"],
      ["spiral", "螺旋板(B)"],
      ["cap", "柱帽(V)"],
      ["slabHole", "板洞(N)"],
      ["forceRebar", "板受力筋(S)"],
      ["negRebar", "板负筋(F)"],
      ["band", "楼层板带(H)"],
    ],
  },
  { name: "基础", items: [] },
  { name: "其它", items: [] },
  {
    name: "自定义",
    open: true,
    items: [
      ["customPoint", "自定义点"],
      ["customLine", "自定义线(X)"],
      ["customFace", "自定义面"],
      ["dimension", "尺寸标注(W)"],
    ],
  },
];

const Chevron = ({ open }) => (
  <svg viewBox="0 0 10 10" className="z-10 size-[10px] shrink-0 bg-white" aria-hidden="true">
    <path
      d={open ? "M1 3l4 4 4-4" : "M3 1l4 4-4 4"}
      fill="none"
      stroke={open ? "#404040" : "#a0a0a0"}
      strokeWidth="1.600"
    />
  </svg>
);

const Tree = () => {
  const [selected, setSelected] = useState("板受力筋(S)");

  return (
    <ul className="ml-3 flex-1 border-l border-dotted border-[#9a9a9a] font-[DejaVu_Sans_Mono,Noto_Sans_CJK_SC,monospace]">
      {folders.map((folder, f) => (
        <li key={f}>
          {!folder.hideTitle && (
            <button type="button" className="-ml-[6px] flex h-4 items-center leading-4">
              <Chevron open={folder.open} />
              <span className="w-[6px] border-t border-dotted border-[#9a9a9a]" />
              <Icon name={folder.open ? "folderOpen" : "folder"} className="mr-[5px] size-4" />
              {folder.name}
            </button>
          )}
          <ul className="ml-[18px] border-l border-dotted border-[#9a9a9a]">
            {folder.items.map(([icon, name]) => (
              <li key={name} className="flex h-4 items-center">
                <span className="w-[10px] border-t border-dotted border-[#9a9a9a]" />
                <button
                  type="button"
                  onClick={() => setSelected(name)}
                  className={`flex h-4 items-center gap-1 pr-px leading-4 whitespace-nowrap ${
                    selected === name ? "bg-[#d9d9d9]" : ""
                  }`}
                >
                  <Icon name={icon} />
                  <span>
                    <Mono>{name}</Mono>
                  </span>
                </button>
                {icon === "customLine" && (
                  <>
                    <Icon name="book" />
                    <span className="mb-2 ml-px bg-[#ffee33] font-[Open_Sans] text-[9px] leading-[9px] font-bold">
                      NEW
                    </span>
                  </>
                )}
              </li>
            ))}
          </ul>
        </li>
      ))}
    </ul>
  );
};

const Sidebar = () => (
  <aside className="flex w-[226px] shrink-0 flex-col border-r border-[#a0a0a0] bg-[#f0f0f0]">
    <div className="flex h-[15px] shrink-0 items-center bg-[#0054e3] pr-1 leading-[15px] text-white">
      <h2 className="flex-1">模块导航栏</h2>
      <button type="button" aria-label="固定" className="mr-2">
        <svg viewBox="0 0 10 10" className="size-[10px]">
          <path d="M3 1h4v4H3zM6 1v4M1 5.500h8M5 5.500V10" fill="none" stroke="#fff" />
        </svg>
      </button>
      <button type="button" aria-label="关闭导航栏">
        <svg viewBox="0 0 10 10" className="size-[10px]">
          <path d="M1 1l8 8M9 1L1 9" stroke="#fff" />
        </svg>
      </button>
    </div>
    <button type="button" className="mt-[2px] h-[23px] shrink-0 border-y border-l border-[#a0a0a0]">
      工程设置
    </button>
    <button type="button" className="h-[22px] shrink-0 border-b border-l border-[#a0a0a0]">
      绘图输入
    </button>
    <div className="flex h-[27px] shrink-0 items-center gap-2 border-l border-[#a0a0a0] bg-linear-to-b from-[#fcfcfc] to-[#eeeeee] pl-[6px]">
      <button type="button" aria-label="全部展开">
        <svg viewBox="0 0 16 16" className="size-4">
          <path d="M5 1v8M1 5h8M12 7v8M8 11h8" stroke="#111" strokeWidth="3" />
          <path d="M5 2v6M2 5h6M12 8v6M9 11h6" stroke="#20a070" />
        </svg>
      </button>
      <button type="button" aria-label="全部折叠">
        <svg viewBox="0 0 16 16" className="size-4">
          <path d="M0 5h9M7 11h9" stroke="#111" strokeWidth="3" />
          <path d="M1 5h7M8 11h7" stroke="#20a070" />
        </svg>
      </button>
    </div>
    <div className="ml-[2px] flex min-h-0 flex-1 overflow-hidden border border-[#828790] bg-white">
      <div className="flex-1 overflow-hidden">
        <Tree />
      </div>
      <div className="mr-[2px] flex w-[15px] shrink-0 flex-col items-center bg-[#f0f0f0] py-1">
        <svg viewBox="0 0 10 10" className="mt-px size-[10px]">
          <path d="M1 7l4-4 4 4" fill="none" stroke="#505050" strokeWidth="1.800" />
        </svg>
        <span className="h-[125px] shrink-0" />
        <span className="w-full flex-1 bg-[#cdcdcd]" />
        <span className="h-[22px] shrink-0" />
        <svg viewBox="0 0 10 10" className="size-[10px]">
          <path d="M1 3l4 4 4-4" fill="none" stroke="#505050" strokeWidth="1.800" />
        </svg>
      </div>
    </div>
    <button type="button" className="mt-px h-6 shrink-0 border-y border-l border-[#a0a0a0]">
      单构件输入
    </button>
  </aside>
);

/* [top x, bottom x] of every bar laid across the slab */
const bars = [
  [687, 676],
  [704, 692],
  [720, 709],
  [752, 742],
  [765, 753],
  [778, 766],
  [809, 799],
  [826, 815],
  [842, 831],
];

const Scene = () => (
  <svg
    viewBox="231 166 1134 305"
    preserveAspectRatio="xMinYMin slice"
    className="absolute inset-0 h-full w-full"
    shapeRendering="crispEdges"
  >
    <g stroke="#d01818" fill="none">
      <path d="M231 287L407 290 650 297 849 301M855 219L1365 231M594 219L580 471M319 330L312 471M856 308L848 471" />
      <path d="M690 220L677 471M742 220L728 471" stroke="#7c0808" />
    </g>
    <g fill="none" stroke="#0c5c1c">
      <circle cx="243" cy="287" r="12" />
      <circle cx="243" cy="205" r="12" />
    </g>

    {/* Beam */}
    <path d="M231 166H850V226L640 221 407 216 231 212z" fill="#b5b500" />
    <path d="M231 167L407 169 566 173V180L407 176 231 172zM624 173L835 177V186L624 181z" fill="#eaea00" />
    <path d="M520 166H681V170L560 168z" fill="#a8a8a0" />
    <path d="M562 167L681 170" stroke="#fff" />
    <path d="M576 168H608L610 220 577 219z" fill="#5a00b0" />
    <path d="M576 168H608V173H576z" fill="#7344a4" />
    <path d="M316 166H349V168H316z" fill="#4a00a0" />

    {/* Frame on the right */}
    <path d="M850 166H893L897 269 989 271 1256 277 1365 280V319L849 307z" fill="#5a5a00" />
    <path d="M942 166H984L989 275H946zM1252 171H1295L1299 280H1256zM1343 173H1365V284H1347z" fill="#5a5a00" />
    <path d="M897 256L946 257V270L897 269zM989 257L1256 264V277L989 271zM1299 265L1347 266V279L1299 278zM942 166H984V178L943 177zM1252 171H1295V185L1252 184zM1343 173H1365V187L1344 186zM850 166H893V176H850z" fill="#757500" />
    <path d="M858 226L866 300 868 226z" fill="#757500" />
    <path d="M842 166H878V226H842z" fill="#a0685e" />
    <path d="M858 177H867V226H858z" fill="#a08040" />

    {/* Slab with its rebars */}
    <g stroke="#a39590" fill="none">
      {bars.map(([top, bottom]) => (
        <path key={top} d={`M${top} 177L${bottom} 398`} />
      ))}
    </g>
    <path d="M677 246L847 250" stroke="#a010a0" strokeWidth="2" />
    <path d="M673 321L842 325" stroke="#85851c" strokeWidth="2" />
    <path d="M736 172L725 398" stroke="#ffff20" strokeWidth="2" />
    <path d="M793 174L782 398" stroke="#cc3ccc" strokeWidth="2" />
    <g fill="none" stroke="#fff">
      <path d="M680 171L850 175 839 400 669 396z" strokeWidth="2" />
      <path d="M680 171L850 175 839 400 669 396z" strokeWidth="4" strokeDasharray="8 8" />
      <path d="M681 176L849 180M668 396V401L838 405 840 400" strokeWidth="2" />
    </g>
    <g fill="none" stroke="#8d8d85" shapeRendering="auto">
      <circle cx="798" cy="319" r="135.500" />
      <circle cx="798" cy="183" r="8" />
      <circle cx="662" cy="319" r="8" />
      <circle cx="933" cy="319" r="8" />
      <circle cx="798" cy="454" r="8" />
    </g>
    <text
      transform="translate(716 354) rotate(-90)"
      className="fill-[#c4c4c4] font-[Liberation_Mono] text-[11px]"
    >
      SLJ 1:C10/C8@200
    </text>

    {/* Axes */}
    <g shapeRendering="auto">
      <path d="M288 421V388" stroke="#10e020" strokeWidth="3" />
      <path d="M288 379l4 10h-8z" fill="#10ff20" />
      <path d="M286 421L285 400" stroke="#1080ff" strokeWidth="4" />
      <path d="M284 394l5 9h-10z" fill="#1080ff" />
      <path d="M287 421L324 422" stroke="#f00" strokeWidth="4" />
      <path d="M335 422l-12-4v8z" fill="#f00" />
      <path d="M271 388h9l-9 11h10" stroke="#2a70d8" fill="none" />
      <path d="M296 382l5 5 6-5M301 387v5" stroke="#20c030" fill="none" />
      <path d="M324 404l9 9M333 404l-9 9" stroke="#c01818" />
    </g>
  </svg>
);

const DisplayPanel = () => (
  <section className="absolute top-[2px] left-[9px] flex h-[178px] w-[167px] flex-col bg-white p-px">
    <h2 className="h-[31px] pl-2 leading-[29px] text-[#999]">钢筋显示控制面板</h2>
    <div className="flex-1 border-t border-r-2 border-b-2 border-l border-[#828790] pt-[2px] pl-1">
      {["底筋", "显示其它图元", "显示详细公式"].map((name) => (
        <label key={name} className="flex h-3 items-center gap-1 leading-3">
          <span className="relative size-[11px]">
            <input
              type="checkbox"
              defaultChecked
              className="peer block size-[11px] appearance-none border border-[#707070] bg-white"
            />
            <svg
              viewBox="0 0 11 11"
              className="pointer-events-none absolute inset-0 hidden size-[11px] peer-checked:block"
            >
              <path d="M2.500 5.500l2 2 4-4.500" fill="none" stroke="#222" strokeWidth="1.200" />
            </svg>
          </span>
          {name}
        </label>
      ))}
    </div>
  </section>
);

const columns = [
  ["", "w-[33px]"],
  ["筋号", "w-[73px]"],
  ["直径(mm)", "w-[56px]"],
  ["级别", "w-[36px]"],
  ["图号", "w-[33px]"],
  ["图形", "w-[201px]"],
  ["计算公式", "w-[166px]"],
  ["公式描述", "w-[156px]"],
  ["长度(mm)", "w-[61px]"],
  ["根数", "w-[38px]"],
  ["搭接", "w-[39px]"],
  ["损耗(%)", "w-[49px]"],
  ["单重(kg)", "w-[61px]"],
  ["总重(kg)", "w-[61px]"],
  ["钢筋归类", "w-[72px]"],
];

const rows = [
  ["SLJ-1.1", "10", "", "1", "3270", "3300-15-15", "净长", "3270", "5", "0", "0", "2.018", "10.088", "直筋"],
  ["SLJ-1.2", "8", "", "1", "3270", "3300-15-15", "净长", "3270", "5", "0", "0", "1.292", "6.458", "直筋"],
  ["SLJ-1.3", "10", "", "1", "3288", "3303-15", "净长", "3288", "1", "0", "0", "2.029", "2.029", "直筋"],
];

const GradeMark = () => (
  <svg viewBox="0 0 10 10" className="mx-auto size-[10px]" role="img" aria-label="三级钢">
    <path d="M1.500 3.500h7v3h-7zM4.500 0v9M6.500 0v9M2 8.500h6" fill="none" stroke="#111" />
  </svg>
);

const cell = "border-r border-b border-[#b4b4b4]";

const RebarTable = () => (
  <div className="min-h-0 flex-1 overflow-hidden border-t border-l border-[#a0a0a0] bg-white">
    <table className="w-[1135px] table-fixed border-separate border-spacing-0 font-[DejaVu_Sans_Mono,Noto_Sans_CJK_SC,monospace] whitespace-nowrap">
      <colgroup>
        {columns.map(([name, width], i) => (
          <col key={i} className={width} />
        ))}
      </colgroup>
      <thead>
        <tr className="h-[19px]">
          {columns.map(([name], i) => (
            <th
              key={i}
              className={`${cell} font-normal leading-4 ${
                i === 2
                  ? "bg-linear-to-b from-[#fbd49a] to-[#f0b35c] text-[#5a1010]"
                  : "bg-linear-to-b from-white to-[#f2f2f2]"
              }`}
            >
              <Mono>{name}</Mono>
            </th>
          ))}
        </tr>
      </thead>
      <tbody>
        {rows.map((row, r) => (
          <tr key={r} className="h-[29px] bg-[#ccffdc]">
            <th
              className={`${cell} pr-2 font-normal ${
                r === 0 ? "bg-[#fdcb83] text-[#5a1010]" : "bg-linear-to-r from-white to-[#f0f0f0]"
              }`}
            >
              <Mono>{r === 0 ? "1*" : r + 1}</Mono>
            </th>
            {row.map((value, c) => (
              <td
                key={c}
                className={`border-b border-[#b4b4b4] leading-4 ${
                  c === 0 ? "border-r-1 border-r-black" : "border-r"
                } ${c === 4 ? "pr-1" : "pl-px"} ${r === 0 && c === 1 ? "bg-[#aae8dc]" : ""}`}
              >
                {c === 2 && <GradeMark />}
                {c === 4 && (
                  <div className="mx-auto mb-1 w-[150px] border-b-2 border-black text-center font-[Liberation_Sans] text-[11px] leading-[14px] text-[#d01818]">
                    {value}
                  </div>
                )}
                {c !== 2 && c !== 4 && <Mono>{value}</Mono>}
              </td>
            ))}
          </tr>
        ))}
        <tr className="h-[19px]">
          <th className={`${cell} bg-[#f4f4f4] pr-2 leading-4 font-normal`}>
            <Mono>4</Mono>
          </th>
          {rows[0].map((_, c) => (
            <td
              key={c}
              className={`border-r border-b border-[#b4b4b4] ${c === 0 ? "border-r-black" : ""}`}
            />
          ))}
        </tr>
      </tbody>
    </table>
  </div>
);

const RebarPanel = () => (
  <section className="flex h-[180px] shrink-0">
    <div className="flex w-[13px] shrink-0 flex-col items-center gap-1 pt-[3px]">
      <button type="button" aria-label="关闭面板">
        <svg viewBox="0 0 10 10" className="block size-[10px]">
          <path d="M.5.5h9v9h-9z" fill="#fff" stroke="#5a2a2a" />
          <path d="M2 2l6 6M8 2L2 8" stroke="#222" strokeWidth="1.300" />
        </svg>
      </button>
      <span className="w-[6px] flex-1 border-x-2 border-dotted border-[#c0c0c0]" />
    </div>
    <div className="flex min-w-0 flex-1 flex-col">
      <Toolbar className="h-[30px] shrink-0">
        <div className="flex gap-px">
          <Tool icon="first" label="首条" disabled />
          <Tool icon="prev" label="上一条" disabled />
          <Tool icon="next" label="下一条" />
          <Tool icon="last" label="末条" />
        </div>
        <Sep />
        <Tool icon="up" label="上移" disabled />
        <Tool icon="down" label="下移" />
        <Sep />
        <Tool icon="insert" disabled>
          插入
        </Tool>
        <Tool icon="remove" disabled>
          删除
        </Tool>
        <Tool icon="scale">缩尺配筋</Tool>
        <Tool icon="info">钢筋信息</Tool>
        <Tool icon="library">钢筋图库</Tool>
        <Tool icon="other" menu compact>
          其他
        </Tool>
        <Tool>关闭</Tool>
        <Sep />
        <span className="pl-1">单构件钢筋总重(kg)：18.575</span>
      </Toolbar>
      <RebarTable />
    </div>
  </section>
);

const FloatingWindow = () => (
  <div className="absolute top-[43px] right-[22px] w-[52px] bg-white shadow-lg">
    <div className="flex h-[25px] items-center justify-between pl-[3px] text-[#999]">
      Poi...
      <span className="mr-px h-5 w-[18px] bg-[#e0e0e0] text-center leading-5 text-white">×</span>
    </div>
    <button
      type="button"
      className="h-[22px] w-full border border-r-2 border-b-2 border-[#6a6a6a] bg-[#f0f0f0]"
    >
      开始
    </button>
  </div>
);

export default function App() {
  return (
    <div className="relative flex h-screen flex-col overflow-hidden bg-[#f0f0f0] font-[Noto_Sans,Noto_Sans_CJK_SC,sans-serif] text-xs text-black">
      <TitleBar />
      <MenuBar />
      <MainToolbar />
      <div className="flex min-h-0 flex-1 gap-[5px]">
        <Sidebar />
        <main className="flex min-w-0 flex-1 flex-col">
          <div className="flex shrink-0 flex-col gap-px overflow-hidden pb-px">
            <EditToolbar />
            <ComponentToolbar />
            <DrawToolbar />
          </div>
          <div className="relative min-h-0 flex-1 overflow-hidden bg-black">
            <Scene />
            <DisplayPanel />
          </div>
          <SnapToolbar />
          <RebarPanel />
        </main>
      </div>
      <ImeBar />
      <div className="absolute -top-[30px] left-[932px] flex size-[46px] items-end justify-center rounded-full border-2 border-[#d8e8d8] bg-[#35c45a] pb-[3px] text-[11px] leading-3 font-bold text-white shadow-md">
        68
      </div>
      <FloatingWindow />
    </div>
  );
}
